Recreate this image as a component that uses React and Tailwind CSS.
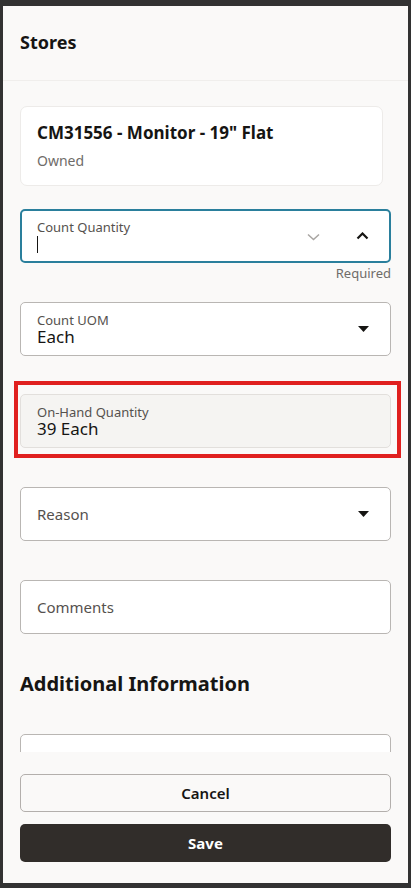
import React from "react";

const font = { fontFamily: '"Noto Sans", "Open Sans", Arial, sans-serif' };

function Triangle() {
  return (
    <svg width="11" height="6" viewBox="0 0 11 6" className="shrink-0">
      <path d="M0 0 L11 0 L5.5 6 Z" fill="#161513" />
    </svg>
  );
}

export default function App() {
  return (
    <div
      className="w-[411px] h-[888px] bg-[#323232] pt-[6px] pl-[3px] pr-[3px] pb-[5px]"
      style={font}
    >
      <div className="flex flex-col h-full bg-[#faf9f8] overflow-hidden text-[#161513]">
        {/* Header */}
        <div className="h-[75px] shrink-0 flex items-center pl-[17px] border-b border-[#f0eeec]">
          <h1 className="text-[18px] font-bold leading-none -mt-[2px]">Stores</h1>
        </div>

        {/* Scroll content */}
        <div className="flex-1 overflow-hidden pl-[17px] pr-[17px]">
          <div className="mt-[25px] mr-[8px] h-[80px] bg-white rounded-[7px] border border-[#edebe9] px-[16px] pt-[14px]">
            <div className="text-[17px] font-bold leading-[24px]">CM31556 - Monitor - 19" Flat</div>
            <div className="text-[14px] text-[#6f6c69] leading-[20px] mt-[6px]">Owned</div>
          </div>

          {/* Count Quantity */}
          <div className="mt-[23px] h-[54px] rounded-[5px] border-2 border-[#2a7f9c] bg-white flex items-center pl-[15px] pr-[20px]">
            <div className="flex-1 self-stretch flex flex-col pt-[9px]">
              <span className="text-[13px] text-[#55514e] leading-[15px]">Count Quantity</span>
              <span className="block w-[1px] h-[17px] bg-[#161513] mt-[1px]"></span>
            </div>
            <svg width="13" height="8" viewBox="0 0 13 8" className="mr-[36px] mt-[2px]">
              <path d="M1 1.5 L6.5 6.5 L12 1.5" fill="none" stroke="#a8a5a2" strokeWidth="1.5" />
            </svg>
            <svg width="13" height="8" viewBox="0 0 13 8">
              <path d="M1.5 6.5 L6.5 1.5 L11.5 6.5" fill="none" stroke="#161513" strokeWidth="2.2" />
            </svg>
          </div>
          <div className="text-right text-[13px] text-[#6f6c69] leading-[16px] mt-[2px]">Required</div>

          {/* Count UOM */}
          <div className="mt-[21px] h-[54px] rounded-[5px] border border-[#b9b6b3] bg-white flex items-start pl-[16px] pr-[21px]">
            <div className="flex-1 flex flex-col pt-[10px]">
              <span className="text-[13px] text-[#55514e] leading-[14px]">Count UOM</span>
              <span className="text-[17px] leading-[19px]">Each</span>
            </div>
            <div className="self-center">
              <Triangle />
            </div>
          </div>

          {/* Highlighted On-Hand */}
          <div className="mt-[25px] -ml-[6px] -mr-[10px] border-4 border-[#e0201f] pt-[9px] pb-[6px] pl-[2px] pr-[6px]">
            <div className="h-[54px] rounded-[5px] border border-[#e2dfdc] bg-[#f5f4f2] flex flex-col pt-[10px] pl-[16px]">
              <span className="text-[13px] text-[#55514e] leading-[14px]">On-Hand Quantity</span>
              <span className="text-[17px] leading-[19px]">39 Each</span>
            </div>
          </div>

          {/* Reason */}
          <div className="mt-[29px] h-[54px] rounded-[5px] border border-[#b9b6b3] bg-white flex items-center pl-[16px] pr-[21px]">
            <span className="flex-1 text-[15px] text-[#55514e]">Reason</span>
            <Triangle />
          </div>

          {/* Comments */}
          <div className="mt-[39px] h-[54px] rounded-[5px] border border-[#b9b6b3] bg-white flex items-center pl-[16px]">
            <span className="text-[15px] text-[#55514e]">Comments</span>
          </div>

          <h2 className="mt-[36px] text-[20px] font-bold leading-[28px]">Additional Information</h2>

          <div className="mt-[36px] h-[54px] rounded-[5px] border border-[#b9b6b3] bg-white"></div>
        </div>

        {/* Footer */}
        <div className="shrink-0 h-[131px] bg-[#faf9f8] pt-[22px] pl-[17px] pr-[17px] flex flex-col gap-[12px]">
          <button className="h-[38px] rounded-[5px] border border-[#b3afac] bg-transparent text-[15px] font-semibold text-[#161513]">
            Cancel
          </button>
          <button className="h-[38px] rounded-[5px] bg-[#312d2a] text-[15px] font-bold text-white">
            Save
          </button>
        </div>
      </div>
    </div>
  );
}
